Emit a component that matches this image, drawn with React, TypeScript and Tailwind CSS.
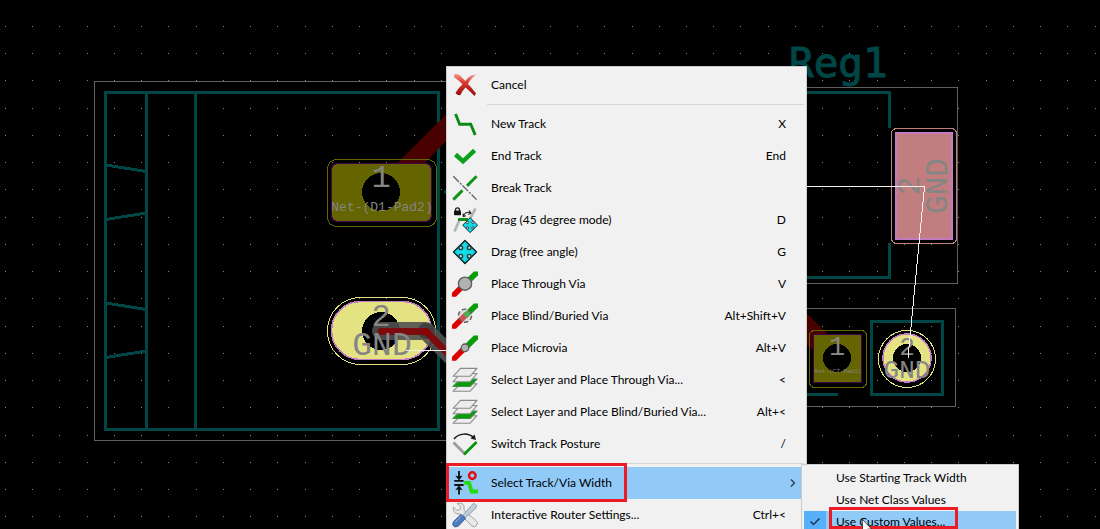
import { Fragment, type ReactNode } from "react";

const TEAL = "#004646";
const OLIVE = "#646400";
const YELLOW = "#e3e382";
const LABEL = "#858585";

const PITCH = 27.24;
const gridDots = Array.from({ length: 40 }, (_, row) =>
  Array.from({ length: 90 }, (_, col) => `M${5 + Math.round(col * PITCH)} ${26 + Math.round(row * PITCH)}h1v1h-1z`).join(""),
).join("");

function Board() {
  return (
    <svg className="absolute inset-0 h-full w-full" role="img" aria-label="PCB layout" shapeRendering="crispEdges">
      <rect width="100%" height="100%" fill="#000" />
      <path d={gridDots} fill="#848484" />

      <g fill="none" stroke="#606060">
        <path d="M600 81.500H94.500V440.500H600" />
        <path d="M780 87.500H957.500V283.500H780" />
        <path d="M780 308.500H955.500V406.500H780" />
      </g>

      <g fill="none" stroke={TEAL} strokeWidth="3">
        <path d="M105.500 92.500H438.500V429.500H105.500Z" />
        <path d="M146.500 92V429M195.500 92V429" />
        <path d="M106 165L146 171.500M106 219.500L146 213M106 303L146 309.500M106 357.500L146 351" />
        <path d="M780 92.500H889.500V127M889.500 244V277.500H780" strokeLinecap="round" />
        <path d="M871.500 321.500H942.500V394.500H871.500Z" />
        <path d="M780 394.500H838" />
      </g>
      <path d="M443 192L447 188V196Z" fill={TEAL} />

      <g fill="#480000">
        <path d="M396 164L450 110V137L423 164Z" />
        <path d="M780 288L829 335L825 360L780 322Z" />
      </g>

      <g>
        <rect x="327.500" y="159.500" width="109" height="67" rx="9" fill="none" stroke={OLIVE} />
        <rect x="331.500" y="163.500" width="100" height="58" rx="6" fill={OLIVE} stroke="#460046" strokeWidth="1.500" />
        <circle cx="381" cy="192" r="19" fill="#000" />
      </g>

      <g>
        <rect x="327.500" y="297.500" width="108" height="67" rx="33" fill="none" stroke={YELLOW} />
        <rect x="331.500" y="301.500" width="100" height="58" rx="29" fill={YELLOW} stroke="#c27bc2" strokeWidth="1.500" />
        <circle cx="381" cy="331" r="19" fill="#000" />
      </g>

      <g>
        <rect x="891.500" y="128.500" width="65" height="115" rx="5" fill="none" stroke="#c27e7e" />
        <rect x="895.500" y="132.500" width="56" height="106" fill="#c27e7e" stroke="#c27bc2" strokeWidth="2" />
      </g>

      <g>
        <rect x="809.500" y="330.500" width="57" height="57" rx="5" fill="none" stroke={OLIVE} />
        <rect x="813.500" y="334.500" width="48" height="48" fill={OLIVE} stroke="#460046" />
        <circle cx="837" cy="358" r="14" fill="#000" />
      </g>

      <g>
        <circle cx="907" cy="359" r="28.500" fill="none" stroke={YELLOW} />
        <circle cx="907" cy="358" r="24" fill={YELLOW} stroke="#c27bc2" strokeWidth="1.500" />
        <circle cx="907" cy="358" r="14" fill="#000" />
      </g>

      <g fill="none" strokeLinejoin="round" strokeLinecap="round" shapeRendering="auto">
        <path d="M381 331H426L460 365" stroke="#505050" strokeOpacity="0.9" strokeWidth="18" />
        <circle cx="426" cy="331" r="8" fill="#404040" />
        <path d="M381 331.500H426L460 365.500" stroke="#7d0b0e" strokeWidth="7" />
        <circle cx="426" cy="331.500" r="3.500" fill="#900000" />
      </g>

      <g fill={LABEL} fontFamily="'Liberation Mono', monospace" textAnchor="middle" shapeRendering="auto">
        <text x="381" y="187" fontSize="32">1</text>
        <text x="382" y="211" fontSize="13">Net-(D1-Pad2)</text>
        <text x="381" y="326" fontSize="32">2</text>
        <text x="382" y="355" fontSize="33">GND</text>
        <text x="837" y="355" fontSize="27">1</text>
        <text x="838" y="373" fontSize="6">Net-(C7-Pad1)</text>
        <text x="907" y="355" fontSize="26">2</text>
        <text x="907" y="378" fontSize="26">GND</text>
        <text transform="translate(919 186) rotate(-90)" fontSize="32">2</text>
        <text transform="translate(947 186) rotate(-90)" fontSize="31">GND</text>
      </g>
      <text x="789" y="77" fontSize="41" fontFamily="'DejaVu Sans Mono', monospace" fill={TEAL} stroke={TEAL} strokeWidth="1">Reg1</text>

      <g fill="none" stroke="#f2f2f2">
        <path d="M780 186.500H924.500L908 358" />
        <path d="M406 350.500H450" />
      </g>
    </svg>
  );
}

function Icon({ children }: { children: ReactNode }) {
  return (
    <svg className="size-[26px]" viewBox="0 0 26 26" fill="none" aria-hidden="true">
      {children}
    </svg>
  );
}

const cancelIcon = (
  <Icon>
    <defs>
      <linearGradient id="cancel" x1="0" y1="2" x2="0" y2="23" gradientUnits="userSpaceOnUse">
        <stop offset="0" stopColor="#f59a8c" />
        <stop offset="0.4" stopColor="#d83a30" />
        <stop offset="1" stopColor="#9a0c0c" />
      </linearGradient>
    </defs>
    <path d="M2.500 2C6 1.600 8 3 9.500 5L13.200 9C16 5.500 19.500 2.300 24.200 2.800C20.700 5 18 8 15.900 12C19 15 21.800 18.500 24 21.500L22.500 24C19.500 21 16.500 18 13.500 15.500C11 18 9.500 20.500 8.500 23C6.500 23.500 4.500 22.500 3.500 21C5.500 17.500 7.800 14.700 10.500 12.300C8 9.500 4.500 7 1.800 5Z" fill="url(#cancel)" />
  </Icon>
);

const newTrackIcon = (
  <Icon>
    <path d="M3.500 3L7.700 13.300H18.700L23.200 24" stroke="#0a8a14" strokeWidth="2.900" />
  </Icon>
);

const endTrackIcon = (
  <Icon>
    <path d="M3.500 11.500L11 18.300L22.600 7.300" stroke="#0ca01c" strokeWidth="4.500" />
  </Icon>
);

const breakTrackIcon = (
  <Icon>
    <path d="M1.300 24.600L10.500 15.400M15 10.900L24.600 1.300" stroke="#109418" strokeWidth="2.900" />
    <path d="M1.300 1.300L24.600 24.600" stroke="#5c5c5c" strokeWidth="1.300" strokeDasharray="8 1.500 2 1.500" />
  </Icon>
);

const moveShape = (
  <>
    <path d="M13 1.500L24.500 13L13 24.500L1.500 13Z" fill="#12dbe6" stroke="#0b2226" strokeWidth="1.400" strokeLinejoin="round" />
    <g fill="#e0e0e0" stroke="#203c40" strokeWidth="1.400">
      <circle cx="8.800" cy="8.800" r="1.800" />
      <circle cx="17.200" cy="8.800" r="1.800" />
      <circle cx="8.800" cy="17.200" r="1.800" />
      <circle cx="17.200" cy="17.200" r="1.800" />
    </g>
  </>
);

const drag45Icon = (
  <Icon>
    <path d="M2.500 24.500L7.500 13M17 13.500L23.500 1.500" stroke="#b4b4b4" strokeWidth="2.700" />
    <path d="M6 12.500H16" stroke="#0a9014" strokeWidth="2.900" />
    <rect x="2" y="3.500" width="7" height="4.800" rx="0.800" fill="#111" />
    <path d="M3.500 4V2.800A2 2 0 0 1 7.500 2.800V4" stroke="#111" strokeWidth="1.200" />
    <path d="M11.500 9C12.500 6 15 4.500 18.500 5.800M11 6.500L11.300 9.500L14 8.800M17 3.500L19 6L16.300 7.500" stroke="#222" strokeWidth="1.100" />
    <g transform="translate(9.700 9.700) scale(0.650)">{moveShape}</g>
  </Icon>
);

const dragFreeIcon = <Icon>{moveShape}</Icon>;

const trackPair = (
  <>
    <path d="M0 21.800L13 8.800L17 12.800L4 25.800H0Z" fill="#dd0000" />
    <path d="M26 4.200L15 15.200L11 11.200L21.800 0.400H26Z" fill="#089c08" />
  </>
);

const throughViaIcon = (
  <Icon>
    {trackPair}
    <circle cx="13" cy="12.700" r="6.600" fill="#b2b2b2" stroke="#5e5e5e" strokeWidth="1.400" />
  </Icon>
);

const blindViaIcon = (
  <Icon>
    {trackPair}
    <circle cx="13" cy="12.700" r="6.600" fill="#c4c4c4" fillOpacity="0.400" stroke="#5e5e5e" strokeWidth="1.400" strokeDasharray="4.500 2.400" />
  </Icon>
);

const microviaIcon = (
  <Icon>
    {trackPair}
    <circle cx="13" cy="12.800" r="3.800" fill="#b2b2b2" stroke="#5e5e5e" strokeWidth="1.300" />
  </Icon>
);

const layersIcon = (
  <Icon>
    <g fill="#ececec" stroke="#8a8a8a" strokeWidth="1.100" strokeLinejoin="round">
      <path d="M8.500 16.700H25L18 24.300H1Z" />
      <path d="M8.500 12H25L18 19.500H1Z" fill="#089c08" stroke="#4a8a4a" />
      <path d="M8.500 6.500H25L18 14.800H1Z" />
      <path d="M8.500 1.400H25L18 9.300H1Z" />
    </g>
  </Icon>
);

const postureIcon = (
  <Icon>
    <path d="M1.500 11.500L13 23" stroke="#9c9c9c" strokeWidth="2.800" />
    <path d="M12 23.500L24.600 11" stroke="#089410" strokeWidth="2.800" />
    <path d="M2 8C7 2 16 1.500 21.500 6.500" stroke="#161616" strokeWidth="1.500" />
    <path d="M24 9L18.500 7.500L22.500 3.500Z" fill="#161616" />
  </Icon>
);

const widthIcon = (
  <Icon>
    <path d="M2.300 10.800H11.600M2.300 15H11.600M7 1V7M7 19V24.500" stroke="#101010" strokeWidth="1.800" />
    <path d="M3.300 5.500L7 6.500L10.700 5.500L7 10.500ZM3.300 20.300L7 19.300L10.700 20.300L7 15.300Z" fill="#101010" />
    <circle cx="20.300" cy="5.600" r="3.300" stroke="#e01010" strokeWidth="2.500" />
    <path d="M12.200 12.800H17L19.700 21.500H26" stroke="#22dc0c" strokeWidth="3.800" />
  </Icon>
);

const settingsIcon = (
  <Icon>
    <path d="M5 1.500Q10 0 12 4L12 8L16 12L24 18.500A3.200 3.200 0 0 1 20 24L12 16L8.500 12Q3 12.500 1.500 8.500L1.300 5L5 8.500L8 7.500L8.500 4.500Z" fill="#e8e8e8" stroke="#9a9a9a" strokeWidth="0.900" />
    <path d="M21.500 1.200L24.600 3.500L23.500 6.500L13.500 15.500L11 13L19.500 3.500Z" fill="#c0cedc" stroke="#8598ab" strokeWidth="0.900" />
    <path d="M9 12.500L13.500 16.500L6.500 24Q3 26 1.300 23.800Q0 21.500 1.800 19.200Z" fill="#4a7cc0" stroke="#365c9c" strokeWidth="0.900" />
    <path d="M3 20.500L9 14.500" stroke="#9abce6" strokeWidth="1" />
  </Icon>
);

type Item = { label: string; keys?: string; icon: ReactNode; submenu?: boolean };

const groups: Item[][] = [
  [{ label: "Cancel", icon: cancelIcon }],
  [
    { label: "New Track", keys: "X", icon: newTrackIcon },
    { label: "End Track", keys: "End", icon: endTrackIcon },
    { label: "Break Track", icon: breakTrackIcon },
    { label: "Drag (45 degree mode)", keys: "D", icon: drag45Icon },
    { label: "Drag (free angle)", keys: "G", icon: dragFreeIcon },
    { label: "Place Through Via", keys: "V", icon: throughViaIcon },
    { label: "Place Blind/Buried Via", keys: "Alt+Shift+V", icon: blindViaIcon },
    { label: "Place Microvia", keys: "Alt+V", icon: microviaIcon },
    { label: "Select Layer and Place Through Via...", keys: "<", icon: layersIcon },
    { label: "Select Layer and Place Blind/Buried Via...", keys: "Alt+<", icon: layersIcon },
    { label: "Switch Track Posture", keys: "/", icon: postureIcon },
  ],
  [
    { label: "Select Track/Via Width", icon: widthIcon, submenu: true },
    { label: "Interactive Router Settings...", keys: "Ctrl+<", icon: settingsIcon },
  ],
];

function MenuRow({ item }: { item: Item }) {
  return (
    <button
      type="button"
      role="menuitem"
      aria-haspopup={item.submenu ? "menu" : undefined}
      className={`flex h-8 w-full items-center text-left ${item.submenu ? "bg-[#91c9f7]" : "hover:bg-[#91c9f7]"}`}
    >
      <span className="flex w-[38px] shrink-0 pl-[3px]">{item.icon}</span>
      <span className="flex-1 pl-1 whitespace-nowrap">{item.label}</span>
      {item.keys && <span className="pr-[18px] whitespace-nowrap">{item.keys}</span>}
      {item.submenu && (
        <svg className="mr-[7px] size-2" viewBox="0 0 8 8" fill="none" stroke="#333" strokeWidth="1.200" aria-hidden="true">
          <path d="M2 0.500L5.500 4L2 7.500" />
        </svg>
      )}
    </button>
  );
}

const widths = [
  { label: "Use Starting Track Width", checked: false },
  { label: "Use Net Class Values", checked: false },
  { label: "Use Custom Values...", checked: true },
];

export default function App() {
  return (
    <main className="relative h-screen overflow-hidden bg-black font-['Lato','Noto_Sans',sans-serif] text-xs text-black">
      <Board />

      <div role="menu" aria-label="Routing" className="absolute top-[66px] left-[446px] w-[361px] border border-[#cccccc] bg-[#f1f1f1] p-0.5">
        {groups.map((group, i) => (
          <Fragment key={group[0].label}>
            {i > 0 && <hr className="my-[3px] ml-[38px] border-[#d7d7d7]" />}
            {group.map((item) => (
              <MenuRow key={item.label} item={item} />
            ))}
          </Fragment>
        ))}
      </div>

      <div role="menu" aria-label="Select Track/Via Width" className="absolute top-[464px] left-[801px] w-[218px] border border-[#cccccc] bg-[#f1f1f1] p-0.5">
        {widths.map((w) => (
          <button
            key={w.label}
            type="button"
            role="menuitemradio"
            aria-checked={w.checked}
            className={`flex h-[22px] w-full items-center text-left ${w.checked ? "bg-[#91c9f7]" : "hover:bg-[#91c9f7]"}`}
          >
            <span className={`flex h-full w-[22px] items-center justify-center ${w.checked ? "bg-[#56b0fa]" : ""}`}>
              {w.checked && (
                <svg className="size-3" viewBox="0 0 12 12" fill="none" stroke="#1c3850" strokeWidth="1.500" aria-hidden="true">
                  <path d="M1.500 5.500L4.500 8.500L10.500 2.500" />
                </svg>
              )}
            </span>
            <span className="pl-2.5 whitespace-nowrap">{w.label}</span>
          </button>
        ))}
      </div>

      <div className="pointer-events-none absolute top-[463px] left-[446px] h-[39px] w-[181px] border-3 border-[#ed1c24]" />
      <div className="pointer-events-none absolute top-[507px] left-[829px] h-[22px] w-[129px] border-3 border-[#ed1c24]" />
      <svg className="pointer-events-none absolute top-[519px] left-[862px] h-4 w-2.5" viewBox="0 0 10 16" aria-hidden="true">
        <path d="M0.500 0.500V13L3.500 10.500L5.500 15L7.500 14L5.500 10H9.500Z" fill="#fff" stroke="#000" strokeWidth="0.600" />
      </svg>
    </main>
  );
}
